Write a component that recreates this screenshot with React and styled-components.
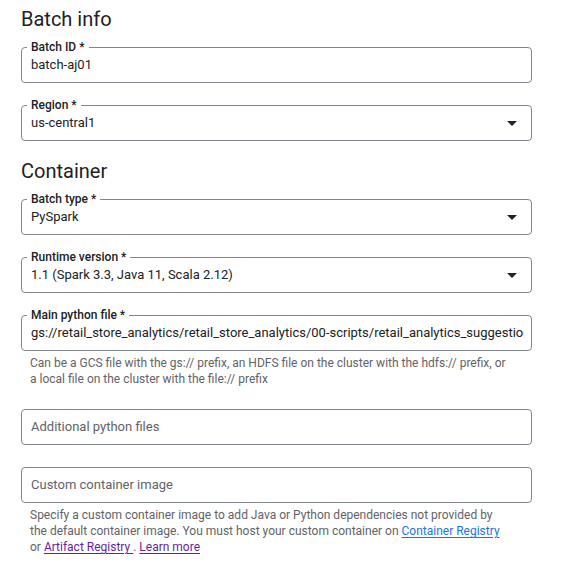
import React from "react";
import styled, { createGlobalStyle } from "styled-components";

const Global = createGlobalStyle`
  html, body { margin: 0; padding: 0; background: #fff; }
  body { font-family: Roboto, "Liberation Sans", Arial, sans-serif; color: #202124; }
`;

const Page = styled.div`
  width: 511px;
  padding: 7px 0 0 21px;
  display: flex;
  flex-direction: column;
  gap: 18px;
`;

const Section = styled.section`
  display: flex;
  flex-direction: column;
`;

const Heading = styled.h2`
  margin: 0 0 16px;
  font-size: 20px;
  line-height: 24px;
  font-weight: 400;
  color: #202124;
`;

const Fields = styled.div`
  display: flex;
  flex-direction: column;
  gap: 22px;
`;

const Group = styled.div`
  display: flex;
  flex-direction: column;
`;

const Box = styled.div`
  position: relative;
  box-sizing: border-box;
  height: 36px;
  border: 1px solid #80868b;
  border-radius: 4px;
  display: flex;
  align-items: center;
  padding: 0 7px 0 9px;
`;

const Label = styled.span`
  position: absolute;
  top: -9px;
  left: 5px;
  padding: 0 4px;
  background: #fff;
  font-size: 12px;
  line-height: 16px;
  font-weight: 500;
  color: #202124;
  white-space: nowrap;
`;

const Value = styled.span`
  flex: 1;
  min-width: 0;
  overflow: hidden;
  white-space: nowrap;
  font-size: 13px;
  line-height: 20px;
  color: ${(p) => (p.$placeholder ? "#5f6368" : "#202124")};
`;

const Arrow = styled.svg`
  flex: none;
  width: 24px;
  height: 24px;
  margin-right: 0;
  fill: #202124;
`;

const Hint = styled.div`
  margin-top: 4px;
  padding-left: 9px;
  font-size: 12px;
  line-height: 16px;
  color: #5f6368;
`;

const Link = styled.a`
  color: ${(p) => (p.$visited ? "#681da8" : "#1a73e8")};
  text-decoration: underline;
  text-underline-offset: 2px;
  cursor: pointer;
`;

function Field({ label, value, placeholder, select, hint }) {
  return (
    <Group>
      <Box>
        {label && <Label>{label}</Label>}
        <Value $placeholder={!value}>{value || placeholder}</Value>
        {select && (
          <Arrow viewBox="0 0 24 24" aria-hidden="true">
            <path d="M7 10l5 5 5-5z" />
          </Arrow>
        )}
      </Box>
      {hint && <Hint>{hint}</Hint>}
    </Group>
  );
}

export default function App() {
  return (
    <>
      <Global />
      <Page>
        <Section>
          <Heading>Batch info</Heading>
          <Fields>
            <Field label="Batch ID *" value="batch-aj01" />
            <Field label="Region *" value="us-central1" select />
          </Fields>
        </Section>
        <Section>
          <Heading>Container</Heading>
          <Fields>
            <Field label="Batch type *" value="PySpark" select />
            <Field label="Runtime version *" value="1.1 (Spark 3.3, Java 11, Scala 2.12)" select />
            <Field
              label="Main python file *"
              value="gs://retail_store_analytics/retail_store_analytics/00-scripts/retail_analytics_suggestions.py"
              hint={
                <>
                  Can be a GCS file with the gs:// prefix, an HDFS file on the cluster with the hdfs:// prefix, or
                  <br />
                  a local file on the cluster with the file:// prefix
                </>
              }
            />
            <Field placeholder="Additional python files" />
            <Field
              placeholder="Custom container image"
              hint={
                <>
                  Specify a custom container image to add Java or Python dependencies not provided by
                  <br />
                  the default container image. You must host your custom container on{" "}
                  <Link>Container Registry</Link>
                  <br />
                  or <Link $visited>Artifact Registry </Link>. <Link $visited>Learn more</Link>
                </>
              }
            />
          </Fields>
        </Section>
      </Page>
    </>
  );
}
